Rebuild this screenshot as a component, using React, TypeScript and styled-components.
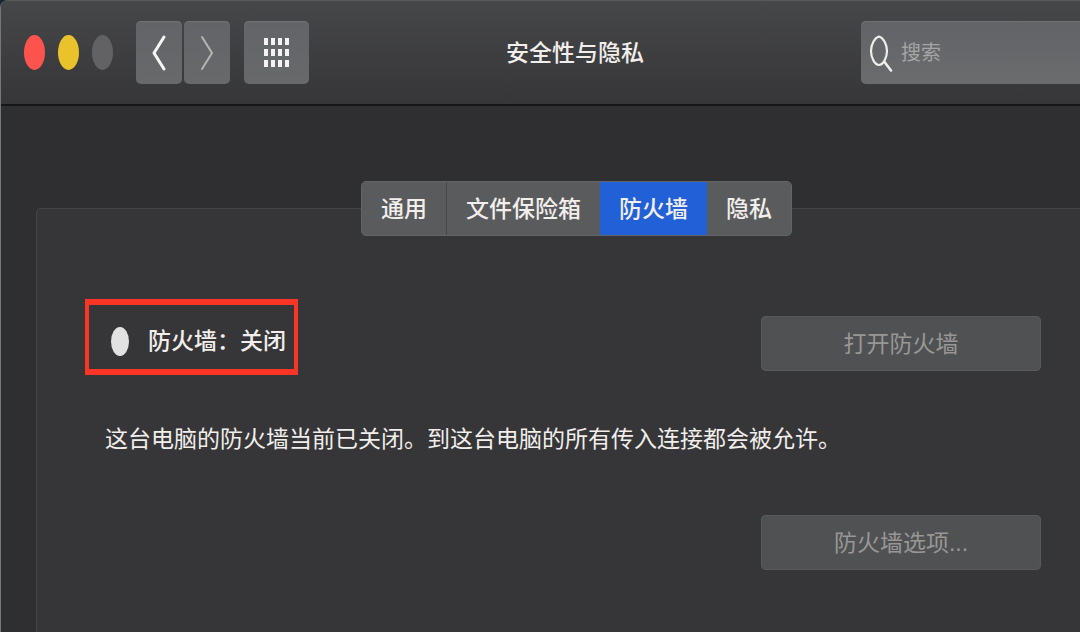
import React, { useState } from "react";
import styled, { createGlobalStyle } from "styled-components";

const GlobalStyle = createGlobalStyle`
  *, *::before, *::after { box-sizing: border-box; }
  html { background: #1b2431; }
  body {
    margin: 0;
    overflow-x: hidden;
    font-family: "Liberation Sans", "Noto Sans CJK SC", sans-serif;
    font-size: 23px;
    line-height: 32px;
    color: #f1eeec;
  }
  button, input { font: inherit; color: inherit; margin: 0; }
  button { border: 0; padding: 0; }
`;

const Window = styled.div`
  min-height: 100vh;
  display: flex;
  flex-direction: column;
  overflow: hidden;
  background: #2f2f32;
  border-left: 1px solid #75777a;
  border-top-left-radius: 8px;
`;

const Toolbar = styled.header`
  display: flex;
  align-items: center;
  height: 106px;
  padding-left: 23px;
  background: linear-gradient(#464749, #363638);
  border-top: 1px solid #58595b;
  border-bottom: 2px solid #161618;
`;

const Lights = styled.div`
  display: flex;
  gap: 13px;
  margin-right: 23px;
`;

const Light = styled.button<{ $color: string }>`
  width: 21px;
  height: 35px;
  border-radius: 50%;
  background: ${(p) => p.$color};
`;

const ToolButton = styled.button<{ $wide?: boolean }>`
  display: flex;
  align-items: center;
  justify-content: center;
  width: ${(p) => (p.$wide ? 65 : 46)}px;
  height: 63px;
  border-radius: 5px;
  background: linear-gradient(#636467, #68696b);
  box-shadow: inset 0 1px #717275;
`;

const NavGroup = styled.div`
  display: flex;
  gap: 2px;
  margin-right: 14px;
`;

const Title = styled.h1`
  flex: 1;
  margin: 0;
  padding-right: 20px;
  text-align: center;
  font-size: 23px;
  font-weight: 500;
  line-height: 32px;
`;

const Search = styled.label`
  display: flex;
  align-items: center;
  gap: 8px;
  width: 219px;
  height: 63px;
  padding-left: 8px;
  border-radius: 5px 0 0 5px;
  background: linear-gradient(#626366, #6b6c6e);
  box-shadow: inset 0 1px #717275;
`;

const SearchInput = styled.input`
  flex: 1;
  min-width: 0;
  padding: 0;
  border: 0;
  outline: 0;
  background: transparent;
  font-size: 20px;
  &::placeholder { color: #a5a5a5; opacity: 1; }
`;

const Panel = styled.main`
  flex: 1;
  margin: 102px -36px 0 35px;
  padding-bottom: 62px;
  background: #363638;
  border: solid #434447;
  border-width: 1px 0 0 1px;
  border-top-left-radius: 5px;
`;

const Tabs = styled.div`
  display: flex;
  width: max-content;
  height: 55px;
  margin: -28px auto 0;
  border: 1px solid #636466;
  border-radius: 5px;
  overflow: hidden;
  background: #5a5b5d;
`;

const Tab = styled.button<{ $divided?: boolean }>`
  padding: 0 19px;
  background: transparent;
  border-right: ${(p) => (p.$divided ? "1px solid #47484a" : "0")};
  font-weight: 500;
  &[aria-selected="true"] { background: #2160d6; }
`;

const Content = styled.div`
  padding: 63px 75px 0 48px;
`;

const Row = styled.div`
  display: flex;
  justify-content: space-between;
  align-items: flex-end;
`;

const Status = styled.div`
  display: flex;
  align-items: center;
  gap: 19px;
  height: 76px;
  padding: 8px 8px 0 22px;
  border: solid #fb3526;
  border-width: 6px 4px;
  font-weight: 500;
`;

const Dot = styled.span`
  width: 18px;
  height: 29px;
  border-radius: 50%;
  background: #e2e2e2;
`;

const ActionButton = styled.button`
  width: 280px;
  height: 55px;
  border-radius: 5px;
  background: #505153;
  box-shadow: inset 0 0 0 1px #58595b;
  color: #989796;
`;

const RowAction = styled(ActionButton)`
  margin-bottom: 4px;
`;

const Description = styled.p`
  margin: 48px 0 60px;
  padding-left: 20px;
`;

const Footer = styled.div`
  display: flex;
  justify-content: flex-end;
`;

const Chevron = ({ back = false }: { back?: boolean }) => (
  <svg width="16" height="38" viewBox="0 0 16 38" fill="none" aria-hidden="true">
    <path
      d={back ? "M13 3 L3 19 L13 35" : "M3 3 L13 19 L3 35"}
      stroke={back ? "#f7f7f7" : "#b5b4b0"}
      strokeWidth={back ? 3 : 2}
      strokeLinecap="round"
      strokeLinejoin="round"
    />
  </svg>
);

const GridIcon = () => (
  <svg width="26" height="30" viewBox="0 0 26 30" fill="#f4f2f2" aria-hidden="true">
    {[0, 11, 22].map((y) =>
      [0, 7, 14, 21].map((x) => <rect key={`${x}-${y}`} x={x} y={y} width="4" height="7" />)
    )}
  </svg>
);

const SearchIcon = () => (
  <svg width="24" height="38" viewBox="0 0 24 38" fill="none" stroke="#efeeea" aria-hidden="true">
    <path
      d="M10 2.5 C14 3.5 18 10 18 17 C18 24 14 31 10 31 C6 31 2 24 2 17 C2 10 6 3.5 10 2.5 Z"
      strokeWidth="2.2"
      strokeLinejoin="round"
    />
    <path d="M15.5 28 L22 36.5" strokeWidth="2.6" strokeLinecap="round" />
  </svg>
);

const TABS = ["通用", "文件保险箱", "防火墙", "隐私"];

export default function App() {
  const [active, setActive] = useState("防火墙");
  return (
    <>
      <GlobalStyle />
      <Window>
        <Toolbar>
          <Lights>
            <Light $color="#fc544d" aria-label="关闭窗口" />
            <Light $color="#e9c22c" aria-label="最小化" />
            <Light $color="#626264" aria-label="缩放" />
          </Lights>
          <NavGroup>
            <ToolButton aria-label="后退"><Chevron back /></ToolButton>
            <ToolButton aria-label="前进"><Chevron /></ToolButton>
          </NavGroup>
          <ToolButton $wide aria-label="显示全部"><GridIcon /></ToolButton>
          <Title>安全性与隐私</Title>
          <Search>
            <SearchIcon />
            <SearchInput type="text" placeholder="搜索" aria-label="搜索" />
          </Search>
        </Toolbar>
        <Panel>
          <Tabs role="tablist">
            {TABS.map((name, i) => (
              <Tab
                key={name}
                role="tab"
                aria-selected={name === active}
                $divided={i === 0}
                onClick={() => setActive(name)}
              >
                {name}
              </Tab>
            ))}
          </Tabs>
          <Content>
            <Row>
              <Status>
                <Dot />
                <span>防火墙：关闭</span>
              </Status>
              <RowAction>打开防火墙</RowAction>
            </Row>
            <Description>这台电脑的防火墙当前已关闭。到这台电脑的所有传入连接都会被允许。</Description>
            <Footer>
              <ActionButton>防火墙选项...</ActionButton>
            </Footer>
          </Content>
        </Panel>
      </Window>
    </>
  );
}
